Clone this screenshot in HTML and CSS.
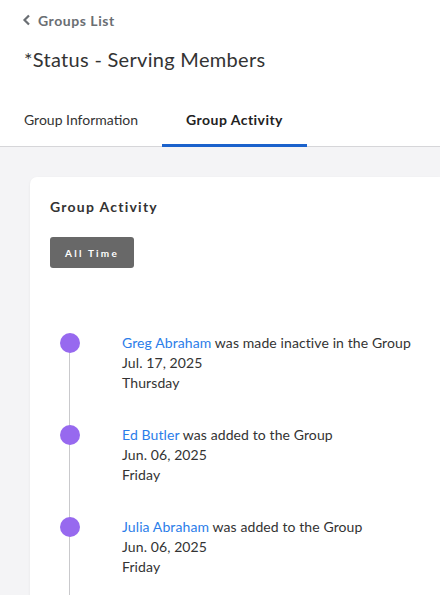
FILE: index.html
```html
<!DOCTYPE html>
<html lang="en">
<head>
  <meta charset="UTF-8" />
  <meta name="viewport" content="width=device-width, initial-scale=1.0" />
  <title>Group Activity</title>
  <link rel="stylesheet" href="styles.css">
</head>
<body>
  <header class="page-header">
    <a class="back-link" href="#">
      <svg width="9" height="12" viewBox="0 0 9 12"><path d="M7 1.5 2.5 6 7 10.5" fill="none" stroke="currentColor" stroke-width="2.2"/></svg>
      Groups List
    </a>
    <h1>*Status - Serving Members</h1>
    <nav class="tabs">
      <a href="#" class="tab">Group Information</a>
      <a href="#" class="tab active">Group Activity</a>
    </nav>
  </header>
  <main>
    <section class="card">
      <h2>Group Activity</h2>
      <button class="range-btn">All Time</button>
      <ul class="timeline">
        <li>
          <span class="dot"></span>
          <div class="entry">
            <p><a href="#">Greg Abraham</a> was made inactive in the Group</p>
            <p>Jul. 17, 2025</p>
            <p>Thursday</p>
          </div>
        </li>
        <li>
          <span class="dot"></span>
          <div class="entry">
            <p><a href="#">Ed Butler</a> was added to the Group</p>
            <p>Jun. 06, 2025</p>
            <p>Friday</p>
          </div>
        </li>
        <li>
          <span class="dot"></span>
          <div class="entry">
            <p><a href="#">Julia Abraham</a> was added to the Group</p>
            <p>Jun. 06, 2025</p>
            <p>Friday</p>
          </div>
        </li>
      </ul>
    </section>
  </main>
</body>
</html>
```

FILE: styles.css
```css
body {
  margin: 0;
  font-family: Lato, "Liberation Sans", sans-serif;
  color: #333;
  background-color: #f4f4f6;
  height: 595px;
  overflow: hidden;
}
.page-header {
  background-color: #fff;
  border-bottom: 1px solid #d6d6d9;
  padding: 0 24px;
}
.back-link {
  display: flex;
  align-items: center;
  gap: 7px;
  padding-top: 11px;
  margin-left: -2px;
  height: 18px;
  font-size: 14px;
  font-weight: 700;
  letter-spacing: 0.55px;
  color: #6a6e73;
  text-decoration: none;
}
h1 {
  margin: 0;
  padding-top: 18px;
  font-size: 20px;
  font-weight: 400;
  line-height: 24px;
  letter-spacing: 0.3px;
}
.tabs {
  display: flex;
  margin-top: 27px;
  margin-left: -24px;
}
.tab {
  padding: 0 24px;
  height: 46px;
  line-height: 44px;
  font-size: 14px;
  color: #333;
  text-decoration: none;
  border-bottom: 3px solid transparent;
  margin-bottom: -1px;
}
.tab.active {
  font-weight: 700;
  letter-spacing: 0.45px;
  color: #222;
  border-bottom-color: #1b62cc;
}
main {
  padding: 30px 0 0 30px;
}
.card {
  background-color: #fff;
  border-radius: 7px 0 0 0;
  box-shadow: 0 1px 3px rgba(0,0,0,0.06);
  padding: 21px 0 0 20px;
  min-height: 420px;
}
h2 {
  margin: 0;
  font-size: 14px;
  font-weight: 700;
  letter-spacing: 1.25px;
  line-height: 18px;
}
.range-btn {
  display: block;
  margin-top: 21px;
  width: 84px;
  height: 31px;
  padding: 0;
  border: none;
  border-radius: 3px;
  background-color: #686868;
  color: #fff;
  font-family: inherit;
  font-size: 10px;
  font-weight: 700;
  letter-spacing: 2.2px;
}
.timeline {
  list-style: none;
  margin: 65px 0 0;
  padding: 0;
}
.timeline li {
  position: relative;
  display: flex;
  padding-bottom: 32px;
}
.timeline li::before {
  content: "";
  position: absolute;
  left: 19px;
  top: 10px;
  bottom: -10px;
  width: 1px;
  background-color: #c9c9cc;
}
.dot {
  position: relative;
  flex: none;
  width: 20px;
  height: 20px;
  margin: 0 42px 0 10px;
  border-radius: 50%;
  background-color: #9769ef;
}
.entry p {
  margin: 0;
  font-size: 14px;
  line-height: 20px;
  letter-spacing: 0.1px;
  white-space: nowrap;
  color: #333;
}
.entry a {
  color: #2b7de9;
  text-decoration: none;
}
```
